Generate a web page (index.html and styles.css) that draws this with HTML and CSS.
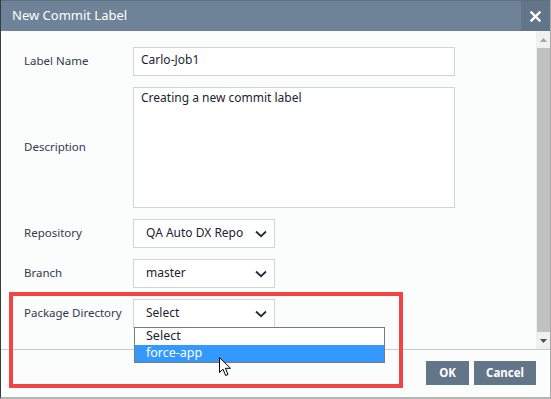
FILE: index.html
```html
<!DOCTYPE html>
<html>
<head>
<meta charset="utf-8">
<link rel="stylesheet" href="styles.css">
</head>
<body>
<div class="dialog">
  <div class="titlebar">
    <div class="title">New Commit Label</div>
    <div class="close">
      <svg width="11" height="11" viewBox="0 0 11 11"><path d="M1.5 1.5 L9.5 9.5 M9.5 1.5 L1.5 9.5" stroke="#fff" stroke-width="2.4" stroke-linecap="square"/></svg>
    </div>
  </div>
  <div class="body">
    <div class="content">
      <div class="form">
        <div class="label">Label Name</div>
        <div class="input">Carlo-Job1</div>
        <div class="label">Description</div>
        <div class="textarea">Creating a new commit label</div>
        <div class="label">Repository</div>
        <div class="select"><span>QA Auto DX Repo</span><svg class="chev" width="12" height="8" viewBox="0 0 12 8"><path d="M1 1.5 L6 6.2 L11 1.5" fill="none" stroke="#1c2a3a" stroke-width="1.8"/></svg></div>
        <div class="label">Branch</div>
        <div class="select"><span>master</span><svg class="chev" width="12" height="8" viewBox="0 0 12 8"><path d="M1 1.5 L6 6.2 L11 1.5" fill="none" stroke="#1c2a3a" stroke-width="1.8"/></svg></div>
        <div class="label">Package Directory</div>
        <div class="select"><span>Select</span><svg class="chev" width="12" height="8" viewBox="0 0 12 8"><path d="M1 1.5 L6 6.2 L11 1.5" fill="none" stroke="#1c2a3a" stroke-width="1.8"/></svg></div>
      </div>
    </div>
    <div class="scrollbar">
      <div class="sb-arrow"><svg width="7" height="4" viewBox="0 0 7 4"><path d="M0 4 L3.5 0 L7 4 Z" fill="#a3a3a3"/></svg></div>
      <div class="sb-thumb"></div>
      <div class="sb-arrow"><svg width="7" height="4" viewBox="0 0 7 4"><path d="M0 0 L3.5 4 L7 0 Z" fill="#505050"/></svg></div>
    </div>
  </div>
  <div class="footer">
    <div class="btn ok">OK</div>
    <div class="btn cancel">Cancel</div>
  </div>

  <div class="listbox">
    <div class="opt">Select</div>
    <div class="opt sel">force-app</div>
  </div>
  <div class="highlight"></div>
  <svg class="cursor" width="13" height="20" viewBox="0 0 13 20"><path d="M0.5 0.5 L0.5 15.5 L4 12.2 L6.6 18.5 L9 17.5 L6.4 11.3 L11.5 11.3 Z" fill="#fff" stroke="#000" stroke-width="1" stroke-linejoin="miter"/></svg>
</div>
</body>
</html>
```

FILE: styles.css
```css
* { box-sizing: border-box; }
html, body { margin: 0; padding: 0; background: #fff; }
body { font-family: "Noto Sans", "DejaVu Sans", sans-serif; }

.dialog {
  position: relative;
  width: 551px;
  height: 399px;
  display: flex;
  flex-direction: column;
  background: #fbfcfc;
  border-left: 1px solid #3a3a3a;
  border-right: 1px solid #a8a8a8;
  border-bottom: 2px solid #b4b4b4;
  overflow: hidden;
}

.titlebar {
  height: 31px;
  flex: none;
  display: flex;
  align-items: stretch;
  background: #6e8397;
  border-top: 1px solid #5e6e7e;
}
.title {
  flex: 1;
  color: #fff;
  font-size: 13px;
  line-height: 28px;
  padding-left: 11px;
}
.close {
  width: 29px;
  background: #637689;
  display: flex;
  align-items: center;
  justify-content: center;
}

.body {
  flex: none;
  height: 318px;
  display: flex;
}
.content {
  flex: 1;
  padding: 16px 0 0 23px;
}
.form {
  display: grid;
  grid-template-columns: 109px auto;
  row-gap: 11px;
  align-items: center;
  justify-items: start;
}
.label {
  font-size: 11.5px;
  color: #2e3b4c;
  padding-bottom: 3px;
}
.input, .textarea, .select {
  background: #fff;
  border: 1px solid #d3d3d3;
  font-size: 12px;
  color: #1b2432;
}
.input {
  width: 322px;
  height: 29px;
  line-height: 24px;
  padding-left: 7px;
}
.textarea {
  width: 322px;
  height: 121px;
  padding: 2px 7px;
  line-height: 16px;
}
.select {
  width: 142px;
  height: 29px;
  display: flex;
  align-items: center;
  justify-content: space-between;
  padding: 0 7px 2px 12px;
}
.chev { display: block; margin-top: 2px; }

.scrollbar {
  width: 14px;
  flex: none;
  background: #f0f0f0;
  display: flex;
  flex-direction: column;
}
.sb-arrow {
  height: 17px;
  display: flex;
  align-items: center;
  justify-content: center;
}
.sb-thumb {
  flex: 1;
  background: #c1c1c1;
  margin: 0 0 0 1px;
}

.footer {
  flex: 1;
  border-top: 1px solid #c9c9c9;
  display: flex;
  justify-content: flex-end;
  align-items: flex-start;
  gap: 5px;
  padding: 11px 14px 0 0;
}
.btn {
  height: 24px;
  line-height: 23px;
  background: #637689;
  color: #fff;
  font-size: 11.5px;
  font-weight: bold;
  text-align: center;
}
.ok { width: 43px; }
.cancel { width: 62px; }

.listbox {
  position: absolute;
  left: 133px;
  top: 327px;
  width: 251px;
  border: 1px solid #7a7a7a;
  background: #fff;
  font-size: 12.5px;
  color: #1b2432;
}
.opt {
  height: 17px;
  line-height: 16px;
  padding-left: 11px;
}
.opt.sel {
  background: #3399ff;
  color: #fff;
}

.highlight {
  position: absolute;
  left: 8px;
  top: 292px;
  width: 394px;
  height: 96px;
  border: 4.5px solid #f24444;
}

.cursor {
  position: absolute;
  left: 218px;
  top: 357px;
}
```
